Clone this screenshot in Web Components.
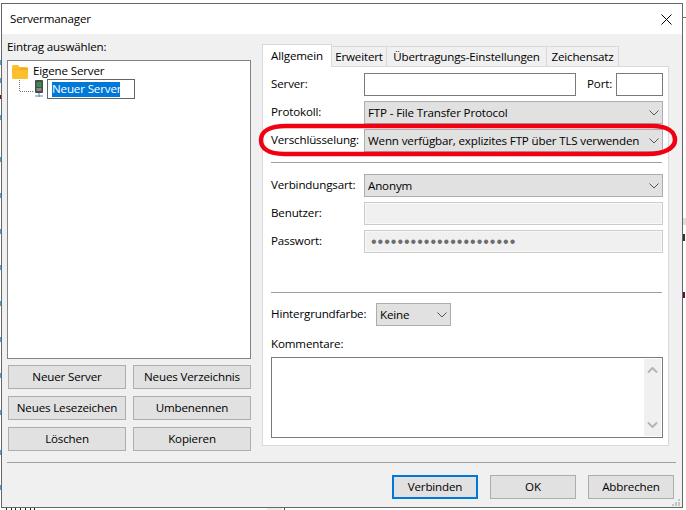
<!DOCTYPE html>
<html lang="de">
<head>
<meta charset="utf-8">
<title>Servermanager</title>
<style>
html, body { margin: 0; padding: 0; background: #fff; }
body { position: relative; width: 686px; height: 510px; overflow: hidden; font: 12px "Open Sans", "Liberation Sans", sans-serif; color: #000; }
</style>
</head>
<body>
<fz-desktop></fz-desktop>
<fz-window>
  <fz-tree slot="left"></fz-tree>
  <fz-form slot="right"></fz-form>
</fz-window>
<script>
const FONT = 'font: 11.6px "Open Sans", "Liberation Sans", sans-serif; letter-spacing: -.16px;';
const CHEVRON = `<svg width="10" height="6" viewBox="0 0 10 6"><path d="M.5.5l4.500 4.500 4.500-4.500" fill="none" stroke="#555" stroke-width="1"/></svg>`;

// scraps of the desktop that stick out round the dialog
class FzDesktop extends HTMLElement {
  constructor() {
    super();
    this.root = this.attachShadow({ mode: 'open' });
    const ticks = [60, 78, 115, 157, 193, 229, 265, 301, 337, 373, 410, 450, 485];
    this.root.innerHTML = `<style>
:host { position: absolute; left: 0; top: 0; display: block; }
svg { display: block; }
</style>
<svg width="686" height="510" viewBox="0 0 686 510">
  ${ticks.map(y => `<rect x="0" y="${y}" width="1" height="5" fill="#4aa3df"/>`).join('')}
  <rect x="0" y="95" width="1" height="4" fill="#6a1030"/>
  <rect x="683" y="17" width="3" height="1" fill="#777"/>
  <rect x="683" y="218" width="3" height="7" fill="#dcdcdc"/>
  <rect x="683" y="234" width="2" height="7" fill="#333"/>
  <rect x="683" y="292" width="2" height="6" fill="#5a1030"/>
  <path d="M6 508h1v2H6zM11 508h1v2h-1zM15 508h1v2h-1zM20 508h1v2h-1zM25 508h1v2h-1zM30 508h1v2h-1zM34 508h1v2h-1z" fill="#222"/>
  <rect x="267" y="508" width="15" height="2" fill="#ececec"/>
  <rect x="284" y="508" width="1" height="2" fill="#555"/>
</svg>`;
  }
}
customElements.define('fz-desktop', FzDesktop);

class FzButton extends HTMLElement {
  constructor() {
    super();
    this.root = this.attachShadow({ mode: 'open' });
    this.root.innerHTML = `<style>
:host { display: flex; box-sizing: border-box; height: 24px; align-items: center; justify-content: center;
  background: #e1e1e1; border: 1px solid #adadad; ${FONT} color: #000; padding-bottom: 1px; }
:host([default]) { border: 2px solid #0078d7; }
</style><slot></slot>`;
  }
}
customElements.define('fz-button', FzButton);

class FzSelect extends HTMLElement {
  constructor() {
    super();
    this.root = this.attachShadow({ mode: 'open' });
    this.root.innerHTML = `<style>
:host { display: flex; box-sizing: border-box; height: 23px; align-items: center; justify-content: space-between;
  background: #e1e1e1; border: 1px solid #adadad; padding: 0 3px 1px 3px; ${FONT} color: #000; }
svg { display: block; margin-top: 2px; }
</style><span><slot></slot></span>${CHEVRON}`;
  }
}
customElements.define('fz-select', FzSelect);

class FzInput extends HTMLElement {
  constructor() {
    super();
    this.root = this.attachShadow({ mode: 'open' });
    this.root.innerHTML = `<style>
:host { display: flex; box-sizing: border-box; height: 23px; align-items: center; background: #fff; border: 1px solid #7a7a7a;
  padding: 0 3px; ${FONT} }
:host([disabled]) { background: #f0f0f0; border: 1px solid #ccc; box-shadow: inset 0 0 0 1px #f8f8f8; color: #6d6d6d; }
</style><slot></slot>`;
  }
}
customElements.define('fz-input', FzInput);

class FzTree extends HTMLElement {
  constructor() {
    super();
    this.root = this.attachShadow({ mode: 'open' });
    this.root.innerHTML = `<style>
:host { display: flex; flex-direction: column; box-sizing: border-box; height: 299px; background: #fff; border: 1px solid #828282;
  padding: 3px 0 0 4px; ${FONT} color: #000; }
.row { display: flex; align-items: center; }
.folder { height: 15px; }
.folder svg { display: block; margin-right: 5px; }
.folder span { margin-top: -2px; }
.node { height: 20px; }
.node svg { display: block; }
.edit { box-sizing: border-box; width: 88px; height: 20px; margin-left: 2px; border: 1px solid #646464; padding: 2px 0 0 4px; background: #fff; }
.sel { display: block; background: #0078d7; color: #fff; height: 15px; line-height: 14px; width: 68px; white-space: nowrap; }
</style>
<div class="row folder">
  <svg width="16" height="14" viewBox="0 0 16 14"><path d="M0 1.500Q0 0 1.500 0H6l1.500 2H14.500Q16 2 16 3.500V12.500Q16 14 14.500 14H1.500Q0 14 0 12.500Z" fill="#fcc02e"/><path d="M0 4.500H7L8.500 3H16V5H0Z" fill="#e6a100" opacity=".55"/></svg>
  <span>Eigene Server</span>
</div>
<div class="row node">
  <svg width="22" height="18" viewBox="0 0 22 18"><path d="M7.500 0v11.500M8 11.500h13" fill="none" stroke="#777" stroke-width="1" stroke-dasharray="1 1"/></svg>
  <svg width="11" height="18" viewBox="0 0 11 18"><rect x="1" y="0" width="8" height="13" rx="1" fill="#4a4a4a"/><rect x="2.500" y="2" width="5" height="5" fill="#3a8f48"/><rect x="2.500" y="8" width="5" height="3" fill="#8a8a8a"/><path d="M5 13v4M1 16h8" stroke="#5f87a8" stroke-width="1"/></svg>
  <div class="edit"><span class="sel">Neuer Server</span></div>
</div>`;
  }
}
customElements.define('fz-tree', FzTree);

class FzTab extends HTMLElement {
  constructor() {
    super();
    this.root = this.attachShadow({ mode: 'open' });
    this.root.innerHTML = `<style>
:host { display: flex; box-sizing: border-box; height: 20px; align-items: center; justify-content: center; white-space: nowrap;
  border: 1px solid #d9d9d9; border-bottom: 0; margin-left: -1px; background: #f0f0f0; ${FONT} }
:host([active]) { height: 23px; background: #fff; margin-left: 0; margin-bottom: -1px; position: relative; z-index: 1; padding-bottom: 2px; }
</style><slot></slot>`;
  }
}
customElements.define('fz-tab', FzTab);

class FzForm extends HTMLElement {
  constructor() {
    super();
    this.root = this.attachShadow({ mode: 'open' });
    this.root.innerHTML = `<style>
:host { display: flex; flex-direction: column; width: 407px; padding-top: 10px; ${FONT} color: #000; }
.tabs { display: flex; align-items: flex-end; height: 22px; }
.panel { box-sizing: border-box; height: 380px; background: #fff; border: 1px solid #d9d9d9; padding: 6px 5px 0 8px; }
.row { display: grid; grid-template-columns: 93px 1fr; align-items: center; height: 23px; margin-bottom: 5px; }
.row span { padding-bottom: 2px; }
.split { display: flex; align-items: center; }
.sep { height: 1px; background: #a0a0a0; }
.bg { display: flex; align-items: center; height: 23px; }
.bg span { width: 105px; padding-bottom: 2px; }
.notes { box-sizing: border-box; height: 81px; margin-top: 4px; background: #fff; border: 1px solid #7a7a7a; padding: 1px 0 1px 0; display: flex; justify-content: flex-end; }
.bar { width: 17px; margin-right: 1px; background: #f0f0f0; display: flex; flex-direction: column; justify-content: space-between; align-items: center; padding: 8px 0; box-sizing: border-box; }
.bar svg { display: block; }
.row .dots { padding: 0 0 0 3px; letter-spacing: 1px; font: 16px "Liberation Sans", sans-serif; color: #6d6d6d; white-space: nowrap; }
</style>
<div class="tabs">
  <fz-tab active style="width:70px">Allgemein</fz-tab>
  <fz-tab style="width:56px">Erweitert</fz-tab>
  <fz-tab style="width:161px">Übertragungs-Einstellungen</fz-tab>
  <fz-tab style="width:73px">Zeichensatz</fz-tab>
</div>
<div class="panel">
  <div class="row"><span>Server:</span>
    <div class="split"><fz-input style="width:212px"></fz-input><span style="margin-left:11px;width:29px">Port:</span><fz-input style="width:47px"></fz-input></div>
  </div>
  <div class="row"><span>Protokoll:</span><fz-select>FTP - File Transfer Protocol</fz-select></div>
  <div class="row"><span>Verschlüsselung:</span><fz-select>Wenn verfügbar, explizites FTP über TLS verwenden</fz-select></div>
  <div class="sep" style="margin:10px 1px 11px 0"></div>
  <div class="row"><span>Verbindungsart:</span><fz-select>Anonym</fz-select></div>
  <div class="row"><span>Benutzer:</span><fz-input disabled></fz-input></div>
  <div class="row"><span>Passwort:</span><fz-input disabled><span class="dots">••••••••••••••••••••••</span></fz-input></div>
  <div class="sep" style="margin:39px 1px 10px 0"></div>
  <div class="bg"><span>Hintergrundfarbe:</span><fz-select style="width:75px">Keine</fz-select></div>
  <div style="margin-top:9px;height:18px;line-height:17px">Kommentare:</div>
  <div class="notes"><div class="bar">
    <svg width="11" height="6" viewBox="0 0 11 6"><path d="M1 5.500l4.500-4.500 4.500 4.500" fill="none" stroke="#b4b4b4" stroke-width="2"/></svg>
    <svg width="11" height="6" viewBox="0 0 11 6"><path d="M1 .5l4.500 4.500 4.500-4.500" fill="none" stroke="#b4b4b4" stroke-width="2"/></svg>
  </div></div>
</div>`;
  }
}
customElements.define('fz-form', FzForm);

class FzWindow extends HTMLElement {
  constructor() {
    super();
    this.root = this.attachShadow({ mode: 'open' });
    this.root.innerHTML = `<style>
:host { display: block; position: relative; box-sizing: border-box; width: 682px; height: 505px; margin: 3px 0 0 1px;
  border: 1px solid #666; background: #f0f0f0; ${FONT} color: #000; }
.title { display: flex; align-items: center; justify-content: space-between; height: 30px; background: #fff; padding: 0 10px 0 8px; }
.title span { padding-bottom: 2px; }
.title svg { display: block; }
.main { display: flex; height: 417px; padding-left: 5px; gap: 11px; }
.left { width: 244px; display: flex; flex-direction: column; }
.caption { height: 26px; line-height: 25px; }
.btns { display: grid; grid-template-columns: 118px 118px; grid-auto-rows: 24px; gap: 7px; margin: 6px 0 0 1px; }
.sep { height: 1px; background: #a0a0a0; margin: 11px 6px 0 5px; }
.foot { display: flex; justify-content: flex-end; gap: 12px; margin: 12px 8px 0 0; }
.foot fz-button { width: 86px; }
.mark { position: absolute; left: 254px; top: 118px; display: block; }
.grip { position: absolute; right: 1px; bottom: 1px; display: block; }
</style>
<div class="title"><span>Servermanager</span>
  <svg width="11" height="11" viewBox="0 0 11 11"><path d="M.5.5l10 10M10.500.5l-10 10" stroke="#000" stroke-width="1" fill="none"/></svg>
</div>
<div class="main">
  <div class="left">
    <div class="caption">Eintrag auswählen:</div>
    <slot name="left"></slot>
    <div class="btns">
      <fz-button>Neuer Server</fz-button><fz-button>Neues Verzeichnis</fz-button>
      <fz-button>Neues Lesezeichen</fz-button><fz-button>Umbenennen</fz-button>
      <fz-button>Löschen</fz-button><fz-button>Kopieren</fz-button>
    </div>
  </div>
  <slot name="right"></slot>
</div>
<div class="sep"></div>
<div class="foot"><fz-button default>Verbinden</fz-button><fz-button>OK</fz-button><fz-button>Abbrechen</fz-button></div>
<svg class="mark" width="424" height="40" viewBox="0 0 424 40"><path d="M30 4H396C412 4 419 10 419 18C419 26 408 32 392 32H28C12 32 5 26 5 18C5 9 14 4 30 4Z" fill="none" stroke="#f00010" stroke-width="4.500"/></svg>
<svg class="grip" width="9" height="7" viewBox="0 0 9 7"><path d="M6 0h2v2H6zM3 3h2v2H3zM6 3h2v2H6zM0 5h2v2H0zM3 5h2v2H3zM6 5h2v2H6z" fill="#c4c4c4"/></svg>`;
  }
}
customElements.define('fz-window', FzWindow);
</script>
</body>
</html>
